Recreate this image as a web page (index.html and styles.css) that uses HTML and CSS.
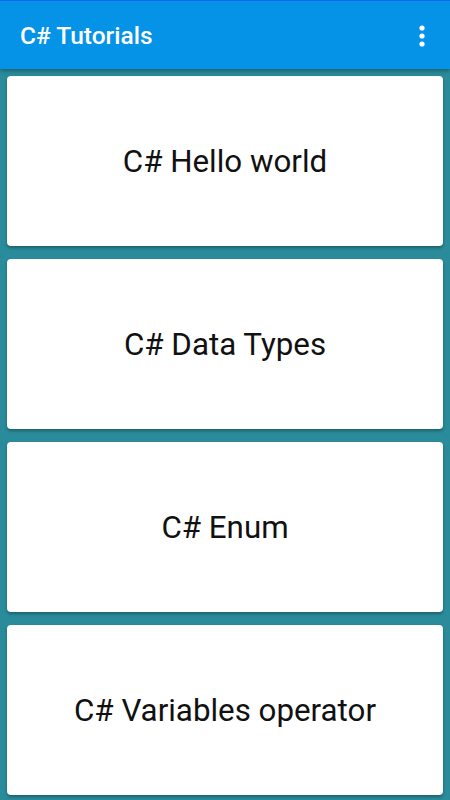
FILE: index.html
```html
<!DOCTYPE html>
<html>
<head>
<meta charset="utf-8">
<link rel="stylesheet" href="styles.css">
</head>
<body>
<header class="appbar">
  <span class="title">C# Tutorials</span>
  <svg class="menu" width="6" height="22" viewBox="0 0 6 22">
    <circle cx="3" cy="3" r="2.6" fill="#fff"/>
    <circle cx="3" cy="11" r="2.6" fill="#fff"/>
    <circle cx="3" cy="19" r="2.6" fill="#fff"/>
  </svg>
</header>
<main class="list">
  <div class="card">C# Hello world</div>
  <div class="card">C# Data Types</div>
  <div class="card">C# Enum</div>
  <div class="card">C# Variables operator</div>
</main>
</body>
</html>
```
FILE: styles.css
```css
html, body {
  margin: 0;
  padding: 0;
}
body {
  width: 450px;
  height: 800px;
  overflow: hidden;
  background: #2a8b9a;
  font-family: Roboto, "Noto Sans", sans-serif;
}
.appbar {
  position: relative;
  z-index: 2;
  height: 68px;
  border-top: 1px solid #1a63ee;
  background: #0593e8;
  display: flex;
  align-items: center;
  justify-content: space-between;
  padding: 0 25px 0 20px;
  box-shadow: 0 2px 4px rgba(0,0,0,0.3);
}
.title {
  color: #fff;
  font-size: 24.5px;
  font-weight: 500;
  margin-top: 1px;
}
.menu {
  display: block;
  margin-top: 2px;
}
.list {
  display: flex;
  flex-direction: column;
  gap: 13px;
  padding: 7px 7px 0 7px;
}
.card {
  height: 170px;
  flex: none;
  background: #fff;
  border-radius: 4px;
  box-shadow: 0 2px 3px rgba(0,0,0,0.3);
  display: flex;
  align-items: center;
  justify-content: center;
  font-size: 31.3px;
  color: #111;
}
```
